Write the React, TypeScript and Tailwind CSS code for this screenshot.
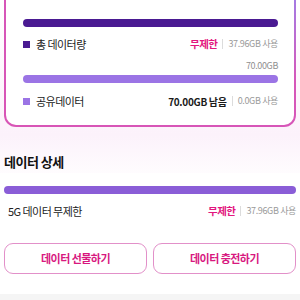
const font = "font-['Noto_Sans_CJK_KR','Noto_Sans',sans-serif]";

function UsageRight({ main, used, strong }: { main: string; used: string; strong?: boolean }) {
  return (
    <div className="flex items-center">
      <span
        className={
          strong
            ? 'text-[10px] font-bold text-[#1a1a1a] tracking-[-0.03em]'
            : 'text-[10.5px] font-bold text-[#e3177f] tracking-[-0.05em]'
        }
      >
        {main}
      </span>
      <span className="mx-[5px] h-[10px] w-px bg-[#dcdcdc]"></span>
      <span className="text-[9px] text-[#9a9a9a] tracking-[-0.04em]">{used}</span>
    </div>
  );
}

export default function App() {
  return (
    <div className={`h-[300px] w-full overflow-hidden bg-white ${font}`}>
      <div className="bg-[linear-gradient(180deg,#ffffff_0px,#fcf2fb_135px,#ffffff_185px)]">
        {/* Usage card, top edge scrolled off */}
        <div className="mx-1 rounded-b-[12px] bg-[linear-gradient(200deg,#a57be3_0%,#d656b9_35%,#d855b6_100%)] px-[2px] pb-[2px]">
          <div className="rounded-b-[10px] bg-white pl-[17px] pr-4 pt-[19px] pb-[15px]">
            <div className="h-2 rounded-full bg-[#4a1a92]"></div>

            <div className="mt-2 flex h-[18px] items-center justify-between">
              <div className="flex items-center gap-[6px]">
                <span className="h-[7px] w-[7px] bg-[#4a1a92]"></span>
                <span className="text-[11px] text-[#222] tracking-[-0.05em]">총 데이터량</span>
              </div>
              <UsageRight main="무제한" used="37.96GB 사용" />
            </div>

            <div className="mt-[5px] h-4 text-right text-[9px] leading-4 text-[#8f8f8f] tracking-[-0.04em]">
              70.00GB
            </div>

            <div className="mt-px h-2 rounded-full bg-[#9b74e5]"></div>

            <div className="mt-[9px] flex h-[18px] items-center justify-between">
              <div className="flex items-center gap-[6px]">
                <span className="h-[7px] w-[7px] bg-[#9b74e5]"></span>
                <span className="text-[11px] text-[#222] tracking-[-0.05em]">공유데이터</span>
              </div>
              <UsageRight main="70.00GB 남음" used="0.0GB 사용" strong />
            </div>
          </div>
        </div>

        {/* Detail */}
        <h2 className="mt-6 h-[22px] px-1 text-[13px] font-bold leading-[22px] text-[#111] tracking-[-0.04em]">
          데이터 상세
        </h2>
      </div>

      <div className="mx-1 mt-[13px] h-2 rounded-full bg-[#8a5dd7]"></div>

      <div className="mt-2 flex h-[18px] items-center justify-between pl-2 pr-1">
        <span className="text-[11px] text-[#222] tracking-[-0.05em]">5G 데이터 무제한</span>
        <UsageRight main="무제한" used="37.96GB 사용" />
      </div>

      <div className="mt-[23px] grid grid-cols-2 gap-[6px] px-1">
        <button className="h-[31px] rounded-[9px] border-[1.5px] border-[#e290c9] bg-white text-[11px] font-bold text-[#d8187f] tracking-[-0.05em]">
          데이터 선물하기
        </button>
        <button className="h-[31px] rounded-[9px] border-[1.5px] border-[#e290c9] bg-white text-[11px] font-bold text-[#d8187f] tracking-[-0.05em]">
          데이터 충전하기
        </button>
      </div>

      <div className="mt-5 h-[10px] bg-[#f5f5f5]"></div>
    </div>
  );
}
